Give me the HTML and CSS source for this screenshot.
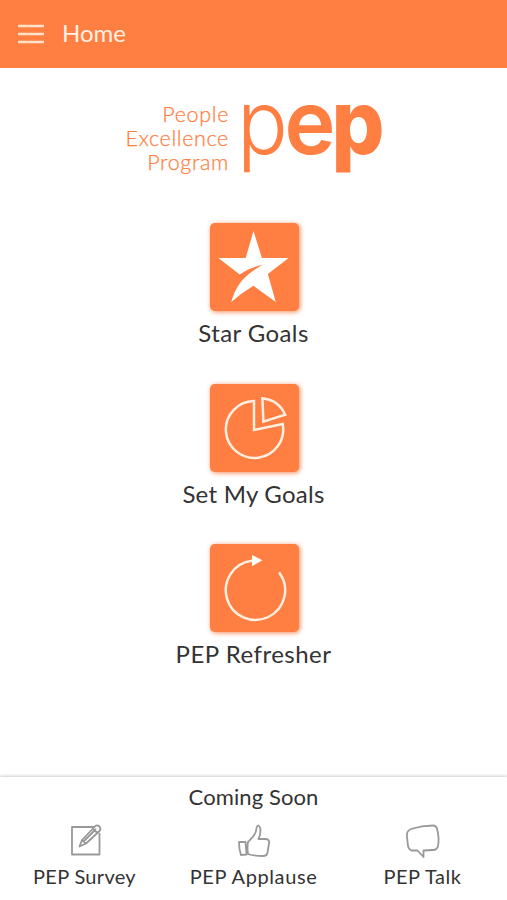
FILE: index.html
```html
<!DOCTYPE html>
<html lang="en">
<head>
<meta charset="utf-8">
<title>Home</title>
<link rel="stylesheet" href="styles.css">
</head>
<body>
<header class="bar">
  <svg class="menu" width="26" height="20" viewBox="0 0 26 20"><path d="M0 2h26M0 10h26M0 18h26"/></svg>
  <h1 class="title">Home</h1>
</header>
<main class="main">
  <div class="brand">
    <div class="tagline"><span class="t1">People</span><span class="t2">Excellence</span><span class="t3">Program</span></div>
    <svg class="wordmark" width="154" height="120" viewBox="-8 -34 154 120">
      <text class="thin" x="-6" y="50" textLength="51" lengthAdjust="spacingAndGlyphs">p</text>
      <text class="mid" x="41.500" y="50" textLength="51" lengthAdjust="spacingAndGlyphs">e</text>
      <text class="heavy" x="88.500" y="50" textLength="53" lengthAdjust="spacingAndGlyphs">p</text>
    </svg>
  </div>
  <nav class="actions">
    <a class="action">
      <svg class="tile" viewBox="0 0 89 89"><path class="solid" d="M43.500 8L52 35.500H79L58 51.500L66 80L43.500 63.500Q31 71 21 80Q24 68 32 58Q39 50 52.500 42.500Q42 44 29.500 52L8 35.500H35.500Z"/></svg>
      <span class="label star">Star Goals</span>
    </a>
    <a class="action">
      <svg class="tile" viewBox="0 0 89 89"><path class="line" d="M44 17.200A29 28.800 0 1 0 73 40.500L44 46.500ZM52.500 14.500L53.500 38L75.500 31Q69 16.500 52.500 14.500Z"/></svg>
      <span class="label set">Set My Goals</span>
    </a>
    <a class="action">
      <svg class="tile" viewBox="0 0 89 89"><path class="line round" d="M42 17A30 30 0 1 0 70 29.500"/><path class="solid" d="M42 11L52.500 16.500L42 22.500Z"/></svg>
      <span class="label refresher">PEP Refresher</span>
    </a>
  </nav>
</main>
<footer class="soon">
  <h2 class="soon-title">Coming Soon</h2>
  <div class="items">
    <div class="item survey">
      <svg class="icon" width="36" height="36" viewBox="0 0 36 36"><path d="M28 3H5V30.500H32.500V9M12.500 22.500L15 16L27.500 3Q30 0 32.500 2.500Q34.500 5 32 7.500L19 19.500ZM26 5L30.500 9M15 16L19 19.500M16.500 17.500L29 5"/></svg>
      <span>PEP Survey</span>
    </div>
    <div class="item applause">
      <svg class="icon" width="36" height="36" viewBox="0 0 36 36"><path d="M3 18H9.500L10.500 30.500L5 31Q3 25.500 3 18ZM12 18C16 14 20 11 20.500 4Q22 -1 24 3.500Q25.500 9 22.500 15H29Q34 15 33 19.500L31.500 28.500Q31 32 27 32C21 32 17 32 12 30Q11 24 12 18Z"/></svg>
      <span>PEP Applause</span>
    </div>
    <div class="item talk">
      <svg class="icon" width="36" height="36" viewBox="0 0 36 36"><path d="M6 5Q17 1.500 28 1.500Q31 1.500 32 4.500Q34.500 14 33 22Q32 26 28 26L18.500 26.500V33L12.500 26.500H7Q4 26 3 22L2 13Q1 7 6 5Z"/></svg>
      <span>PEP Talk</span>
    </div>
  </div>
</footer>
</body>
</html>
```
FILE: styles.css
```css
* { box-sizing: border-box; }
body {
  margin: 0;
  height: 900px;
  display: flex;
  flex-direction: column;
  background: #fff;
  color: #333;
  font-family: Lato, "Liberation Sans", sans-serif;
  overflow: hidden;
}
h1, h2 { margin: 0; font-weight: 400; }
.bar {
  height: 68px;
  flex: none;
  display: flex;
  align-items: center;
  gap: 18px;
  padding: 0 18px;
  background: #ff7e41;
  color: #fff1e4;
}
.menu { stroke: #ffe3c9; stroke-width: 2.3; fill: none; }
.title { font-size: 24px; line-height: 30px; padding-bottom: 2px; }
.main { flex: 1; }
.brand {
  display: flex;
  justify-content: flex-end;
  width: 389px;
  height: 155px;
  padding-top: 34px;
  gap: 6px;
}
.tagline {
  display: flex;
  flex-direction: column;
  align-items: flex-end;
  font-size: 21.500px;
  font-weight: 300;
  letter-spacing: .65px;
  line-height: 24px;
  color: #ff7e41;
  -webkit-text-stroke: .25px #ff7e41;
}
.wordmark { overflow: visible; fill: #ff7e41; font-family: Inter, sans-serif; font-size: 89px; margin-top: -32px; }
.thin { font-weight: 300; }
.mid { font-weight: 600; }
.heavy { font-weight: 800; }
.actions {
  display: flex;
  flex-direction: column;
  align-items: center;
  gap: 35.500px;
}
.action { display: flex; flex-direction: column; align-items: center; height: 125px; }
.tile {
  width: 89px;
  height: 89px;
  margin-left: 2px;
  border-radius: 5px;
  background: #ff7e41;
  box-shadow: 1px 1px 5px #f58a5a;
}
.solid { fill: #fff; }
.line { fill: none; stroke: #fff0e2; stroke-width: 2.5; }
.round { stroke-linecap: round; }
.label { font-size: 24px; line-height: 30px; margin-top: 7px; }
.star { letter-spacing: .4px; }
.set { letter-spacing: .25px; }
.refresher { letter-spacing: .5px; }
.soon {
  height: 123px;
  flex: none;
  padding-top: 7px;
  background: #fff;
  box-shadow: 0 -1px 3px #ccc;
}
.soon-title { font-size: 22px; line-height: 26px; text-align: center; letter-spacing: .1px; }
.items { display: grid; grid-template-columns: repeat(3, 169px); margin-top: 14px; }
.item {
  display: flex;
  flex-direction: column;
  align-items: center;
  font-size: 20px;
  line-height: 24px;
  letter-spacing: .3px;
}
.applause { letter-spacing: .6px; }
.talk { letter-spacing: .5px; }
.icon { overflow: visible; fill: none; stroke: #999; stroke-width: 1.8; stroke-linejoin: round; }
.item span { margin-top: 4px; }
```
